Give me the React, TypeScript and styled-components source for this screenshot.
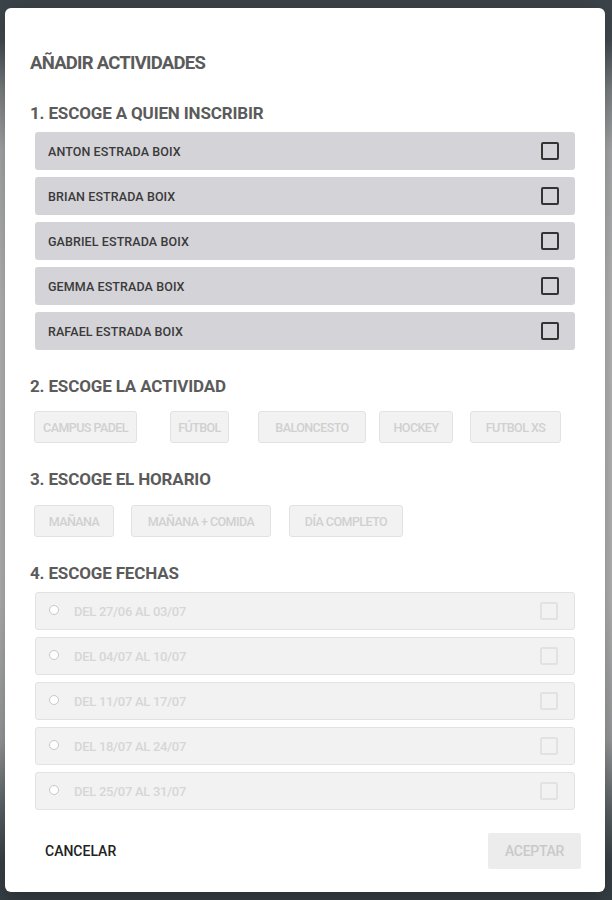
import React from "react";
import styled, { createGlobalStyle } from "styled-components";

const GlobalStyle = createGlobalStyle`
  html, body { margin: 0; padding: 0; }
  body {
    width: 612px;
    height: 900px;
    overflow: hidden;
    font-family: Roboto, "Liberation Sans", sans-serif;
    background: linear-gradient(
      to bottom,
      #3b444a 0px,
      #434c52 40px,
      #7d8285 90px,
      #a9abac 150px,
      #b9b9b9 300px,
      #b5b5b5 600px,
      #9a9c9d 740px,
      #5c6367 810px,
      #3a4348 860px,
      #353e43 900px
    );
  }
`;

const Backdrop = styled.div`
  box-sizing: border-box;
  width: 612px;
  height: 900px;
  padding: 8px 7px 8px 5px;
`;

const Modal = styled.div`
  box-sizing: border-box;
  width: 600px;
  height: 884px;
  background: #fff;
  border-radius: 6px;
  padding: 43px 24px 0 25px;
  display: flex;
  flex-direction: column;
  box-shadow: 0 4px 20px rgba(0, 0, 0, 0.3);
`;

const Title = styled.h1`
  margin: 0;
  font-size: 18.5px;
  line-height: 24px;
  font-weight: 700;
  color: #5b5b5b;
  letter-spacing: -0.75px;
`;

const Heading = styled.h2<{ $top: number; $bottom: number }>`
  margin: ${(p) => p.$top}px 0 ${(p) => p.$bottom}px;
  font-size: 17px;
  line-height: 24px;
  font-weight: 700;
  color: #5b5b5b;
  letter-spacing: -0.15px;
`;

const List = styled.div`
  display: flex;
  flex-direction: column;
  gap: 7px;
  margin: 0 6px 0 5px;
`;

const PersonRow = styled.label`
  box-sizing: border-box;
  height: 38px;
  display: flex;
  align-items: center;
  justify-content: space-between;
  padding: 0 16px 0 13px;
  background: #d4d3d8;
  border-radius: 3px;
  font-size: 12.5px;
  font-weight: 500;
  letter-spacing: 0.1px;
  color: #3a3a3a;
`;

const Box = styled.span<{ $disabled?: boolean }>`
  box-sizing: border-box;
  width: 18px;
  height: 18px;
  border: 2px solid ${(p) => (p.$disabled ? "#e2e2e2" : "#333")};
  border-radius: 2px;
`;

const ChipRow = styled.div`
  display: flex;
  margin: 0 0 0 4px;
`;

const Chip = styled.button<{ $gap: number; $w: number }>`
  box-sizing: border-box;
  height: 32px;
  width: ${(p) => p.$w}px;
  margin-right: ${(p) => p.$gap}px;
  padding: 0;
  background: #f2f2f2;
  border: 1px solid #e2e2e2;
  border-radius: 3px;
  font-family: Roboto, "Liberation Sans", sans-serif;
  font-size: 12.5px;
  font-weight: 500;
  letter-spacing: -0.55px;
  color: #d0d0d0;
`;

const DateRow = styled.label`
  box-sizing: border-box;
  height: 38px;
  display: flex;
  align-items: center;
  padding: 0 16px 0 13px;
  background: #f2f2f2;
  border: 1px solid #e2e2e2;
  border-radius: 3px;
  font-size: 13px;
  font-weight: 500;
  letter-spacing: -0.3px;
  color: #d6d6d6;
`;

const Radio = styled.span`
  box-sizing: border-box;
  width: 10px;
  height: 10px;
  border-radius: 50%;
  border: 1px solid #c8c8c8;
  background: #fff;
  margin: -2px 15px 0 0;
`;

const DateText = styled.span`
  flex: 1;
`;

const Footer = styled.div`
  display: flex;
  align-items: center;
  justify-content: space-between;
  margin-top: 23px;
`;

const CancelButton = styled.button`
  background: none;
  border: none;
  padding: 0 0 0 15px;
  font-family: Roboto, "Liberation Sans", sans-serif;
  font-size: 14px;
  font-weight: 500;
  letter-spacing: 0px;
  color: #222;
`;

const AcceptButton = styled.button`
  box-sizing: border-box;
  width: 93px;
  height: 36px;
  background: #ececec;
  border: none;
  border-radius: 2px;
  font-family: Roboto, "Liberation Sans", sans-serif;
  font-size: 14px;
  font-weight: 500;
  letter-spacing: -0.3px;
  color: #c9c9c9;
`;

const people = [
  "ANTON ESTRADA BOIX",
  "BRIAN ESTRADA BOIX",
  "GABRIEL ESTRADA BOIX",
  "GEMMA ESTRADA BOIX",
  "RAFAEL ESTRADA BOIX",
];

const activities = [
  { label: "CAMPUS PADEL", w: 103, gap: 33 },
  { label: "FÚTBOL", w: 59, gap: 29 },
  { label: "BALONCESTO", w: 108, gap: 13 },
  { label: "HOCKEY", w: 74, gap: 17 },
  { label: "FUTBOL XS", w: 91, gap: 0 },
];

const schedules = [
  { label: "MAÑANA", w: 80, gap: 17 },
  { label: "MAÑANA + COMIDA", w: 140, gap: 18 },
  { label: "DÍA COMPLETO", w: 114, gap: 0 },
];

const dates = [
  "DEL 27/06 AL 03/07",
  "DEL 04/07 AL 10/07",
  "DEL 11/07 AL 17/07",
  "DEL 18/07 AL 24/07",
  "DEL 25/07 AL 31/07",
];

export default function App() {
  return (
    <>
      <GlobalStyle />
      <Backdrop>
        <Modal>
          <Title>AÑADIR ACTIVIDADES</Title>
          <Heading $top={26} $bottom={7}>1. ESCOGE A QUIEN INSCRIBIR</Heading>
          <List>
            {people.map((p) => (
              <PersonRow key={p}>
                <span>{p}</span>
                <Box />
              </PersonRow>
            ))}
          </List>
          <Heading $top={24} $bottom={13}>2. ESCOGE LA ACTIVIDAD</Heading>
          <ChipRow>
            {activities.map((a) => (
              <Chip key={a.label} $w={a.w} $gap={a.gap} disabled>
                {a.label}
              </Chip>
            ))}
          </ChipRow>
          <Heading $top={24} $bottom={14}>3. ESCOGE EL HORARIO</Heading>
          <ChipRow>
            {schedules.map((s) => (
              <Chip key={s.label} $w={s.w} $gap={s.gap} disabled>
                {s.label}
              </Chip>
            ))}
          </ChipRow>
          <Heading $top={24} $bottom={7}>4. ESCOGE FECHAS</Heading>
          <List>
            {dates.map((d) => (
              <DateRow key={d}>
                <Radio />
                <DateText>{d}</DateText>
                <Box $disabled />
              </DateRow>
            ))}
          </List>
          <Footer>
            <CancelButton>CANCELAR</CancelButton>
            <AcceptButton disabled>ACEPTAR</AcceptButton>
          </Footer>
        </Modal>
      </Backdrop>
    </>
  );
}
